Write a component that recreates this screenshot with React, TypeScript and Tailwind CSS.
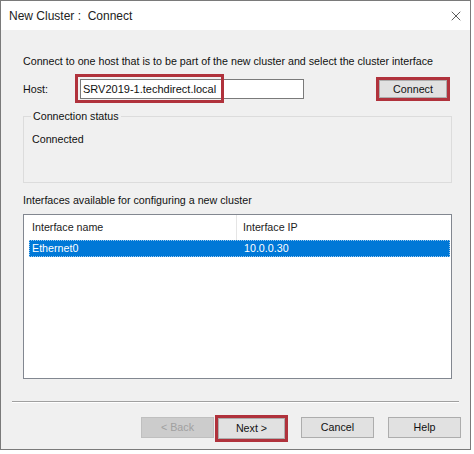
import { X } from "lucide-react";

const font = { fontFamily: '"Liberation Sans", Arial, sans-serif' };

function WinButton({ label, disabled, highlight }: { label: string; disabled?: boolean; highlight?: boolean }) {
  const btn = (
    <div
      className={
        "flex items-center justify-center border h-[21px] " +
        (disabled
          ? "bg-[#cccccc] border-[#bfbfbf] text-[#a0a0a0]"
          : "bg-[#e1e1e1] border-[#adadad] text-[#111]") +
        (highlight ? " w-[67px]" : " w-[73px]")
      }
    >
      {label}
    </div>
  );
  if (highlight) {
    return <div className="border-[3px] border-[#b0323c] p-0">{btn}</div>;
  }
  return btn;
}

export default function App() {
  return (
    <div className="w-[474px] h-[454px] bg-white text-[10.7px] text-[#111]" style={font}>
      <div className="w-[471px] h-[450px] border border-[#7a7a7a] flex flex-col bg-[#f0f0f0]">
        {/* title bar */}
        <div className="h-[29px] bg-white flex items-center justify-between pl-[8px] pr-[6px] shrink-0">
          <span className="text-[12px] text-[#222]">New Cluster :&nbsp; Connect</span>
          <X size={16} strokeWidth={1.2} className="text-[#333]" />
        </div>

        <div className="flex-1 flex flex-col px-[22px] pt-[24px]">
          <div className="leading-[14px]">
            Connect to one host that is to be part of the new cluster and select the cluster interface
          </div>

          {/* host row */}
          <div className="flex items-center mt-[7px] h-[28px]">
            <span className="w-[57px]">Host:</span>
            <div className="relative">
              <div className="w-[224px] h-[20px] bg-white border border-[#7a7a7a] flex items-center pl-[2px] text-[11px]">
                SRV2019-1.techdirect.local
              </div>
              <div className="absolute left-[-5px] top-[-5px] w-[149px] h-[29px] border-[3px] border-[#b0323c]" />
            </div>
            <div className="ml-auto mr-[-2px] border-[3px] border-[#b0323c]">
              <div className="w-[68px] h-[18px] bg-[#e1e1e1] border border-[#adadad] flex items-center justify-center">
                Connect
              </div>
            </div>
          </div>

          {/* connection status group */}
          <div className="relative mt-[13px] h-[67px] border border-[#dcdcdc] w-[429px]">
            <span className="absolute left-[7px] top-[-8px] bg-[#f0f0f0] px-[2px] leading-[14px]">Connection status</span>
            <div className="pl-[8px] pt-[14px]">Connected</div>
          </div>

          <div className="mt-[10px] leading-[14px]">Interfaces available for configuring a new cluster</div>

          {/* list view */}
          <div className="mt-[7px] w-[429px] h-[165px] bg-white border border-[#828790] pl-[5px] pr-[1px]">
            <div className="flex h-[25px] items-center text-[#222]">
              <div className="w-[208px] h-full flex items-center pl-[3px] border-r border-[#e5e5e5]">Interface name</div>
              <div className="pl-[6px]">Interface IP</div>
            </div>
            <div className="flex h-[17px] items-center bg-[#0078d7] text-white border border-dotted border-[#99c9ef]">
              <div className="w-[208px] pl-[2px]">Ethernet0</div>
              <div className="pl-[6px]">10.0.0.30</div>
            </div>
          </div>
        </div>

        {/* separator + buttons */}
        <div className="px-[11px] shrink-0">
          <div className="border-t border-[#a0a0a0] border-b border-b-white" />
        </div>
        <div className="h-[46px] flex items-start justify-end pr-[9px] pt-[13px] shrink-0 gap-0">
          <div className="mt-[1px]"><WinButton label="< Back" disabled /></div>
          <div className="ml-[1px] mt-[-1px]"><WinButton label="Next >" highlight /></div>
          <div className="ml-[13px] mt-[1px]"><WinButton label="Cancel" /></div>
          <div className="ml-[14px] mt-[1px]"><WinButton label="Help" /></div>
        </div>
      </div>
    </div>
  );
}
